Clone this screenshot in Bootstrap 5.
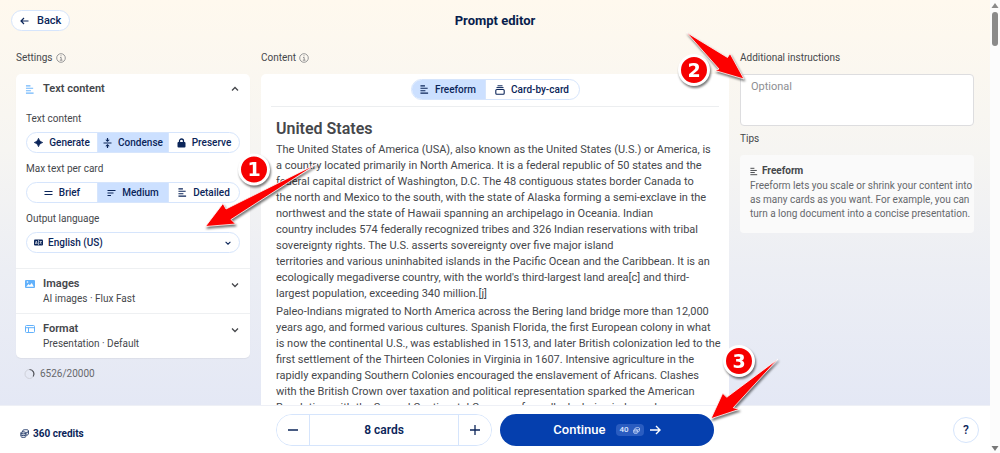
<!DOCTYPE html>
<html lang="en">
<head>
<meta charset="utf-8">
<meta name="viewport" content="width=device-width, initial-scale=1">
<title>Prompt editor</title>
<link href="https://cdn.jsdelivr.net/npm/bootstrap@5.3.0/dist/css/bootstrap.min.css" rel="stylesheet">
<style>
:root{--ink:#0b2559;--text:#45474b;--soft:#66686c;--line:#d6e5fc;--pick:#cce0ff}
body{font-family:Roboto,"Liberation Sans",sans-serif;font-size:10px;line-height:16px;color:var(--text)}
svg{flex:none}
.editor{background:linear-gradient(#fff9ee 0,#f6f5f2 150px,#eceef4 270px,#e4e8f5 405px)}
.cols{display:grid;grid-template-columns:minmax(0,1fr) minmax(0,2fr) minmax(0,1fr);column-gap:11px;padding:0 16px}
.topbar{height:41px}
.page-title{font-size:13px;font-weight:700;color:#071d4d;line-height:20px}
.pill{border:1px solid var(--line);background:#fff;color:var(--ink);font-weight:500;border-radius:16px}
.pill:hover{background:#f4f8ff;color:var(--ink);border-color:var(--line)}
.back-btn{font-size:11px;line-height:18px;padding:0 8px;height:21px;margin-left:-5px}
.col-label{height:16px;margin:9px 0 8px}
.info-icon{color:#7d7f83;margin-left:3px}
.panel{background:#fff;border-radius:5px}
.settings-panel{box-shadow:0 1px 1px #0000000d}
.sec-title{font-size:11px;font-weight:600;line-height:16px}
.sec-sub{line-height:14px}
.sec-btn{border:0;background:none;color:var(--text);padding:7px 10px 7px 9px;text-align:left;width:100%}
.sec-icon{width:10px;margin-right:8px}
.sec-fields{padding:7px 10px}
.rule{border-top:1px solid #eef0f2}
.field{margin-bottom:8px}
.field-label{height:16px;margin-bottom:5px}
.seg{border:1px solid var(--line);border-radius:11px;overflow:hidden;background:#fff;height:21px}
.seg .btn{flex:1 1 0;border:0;border-radius:0;padding:0;color:var(--ink);font-size:10px;font-weight:500;line-height:19px;display:flex;align-items:center;justify-content:center;gap:6px}
.seg .btn + .btn-check + .btn{border-left:1px solid var(--line)}
.seg .btn-check:checked + .btn{background:var(--pick);color:var(--ink)}
.mode-seg{width:169px}
.mode-seg .btn{flex:0 0 auto;width:73px}
.mode-seg .btn:last-child{width:94px}
.lang{appearance:none;width:100%;height:21px;padding:0 24px 0 21px;font-size:10px;line-height:18px;outline-offset:1px}
.lang-icon{position:absolute;left:8px;top:6px}
.lang-arrow{position:absolute;right:8px;top:7px}
.modebar{padding:5px 0 6px;margin:0 10px;border-bottom:1px solid #eceef0}
.doc{padding:11px 15px 0;font-size:11px;white-space:nowrap}
.doc h1{font-size:16px;line-height:22px;font-weight:600;margin:0 0 2px}
.doc p{margin:0 0 2px}
.extra{height:52px;border:1px solid #dddddf;border-radius:4px;padding:3px 10px;font-size:11px;line-height:17px;resize:none;width:100%;display:block;background:#fff}
.extra::placeholder{color:#8d8e92}
.tip{background:#fafafa;border-radius:4px;padding:8px 0 12px 10px}
.tip-body{line-height:14px;color:var(--soft);white-space:nowrap}
.foot{background:#fff;height:48px;box-shadow:0 -1px 0 #eef0f6;position:relative}
.actions{padding:8px 15px 7px;gap:8px}
.stepper{flex:1 1 0;height:32px;border:1px solid var(--line);border-radius:16px;overflow:hidden}
.stepper button{width:32px;border:0;background:#fff;color:var(--ink);padding:0}
.stepper output{border:solid var(--line);border-width:0 1px;font-size:12px;font-weight:600;color:var(--ink);line-height:30px}
.go{flex:1 1 0;height:32px;border:0;border-radius:16px;background:#053fae;color:#fff;font-size:13px;font-weight:500;padding:0}
.go:hover{background:#04358f;color:#fff}
.cost{background:#2a5cc0;border-radius:4px;font-size:8px;line-height:12px;padding:0 4px;margin:0 6px 0 10px;color:#dbe7ff}
.help{width:26px;height:26px;border-radius:50%;font-size:12px;line-height:24px;padding:0;margin-right:-5px}
.scroller{width:10px;flex:none;background:#fcfcfc;padding:3px 0 2px}
.thumb{width:6px;height:34px;border-radius:3px;background:#8b8b8b;margin-top:4px}
.note{position:absolute;pointer-events:none;z-index:5;overflow:visible;filter:drop-shadow(1px 2px 1px #0008)}
.note text{font:700 19px "DejaVu Sans",sans-serif;fill:#fff;text-anchor:middle}
.note-1{left:205px;top:153px}.note-2{left:678px;top:32px}.note-3{left:711px;top:345px}
</style>
</head>
<body class="vh-100 overflow-hidden d-flex position-relative">

<svg class="d-none" aria-hidden="true">
  <symbol id="lines" viewBox="0 0 10 10"><path d="M.5 1h5M.5 3.700h8M.5 6.300h5.500M.5 9h8.500" stroke="currentColor" fill="none" stroke-width="1.200"/></symbol>
  <symbol id="down" viewBox="0 0 10 10"><path d="M2 3.500l3 3 3-3" stroke="currentColor" fill="none" stroke-width="1.300"/></symbol>
  <symbol id="info" viewBox="0 0 10 10"><g stroke="currentColor" fill="none" stroke-width=".8"><circle cx="5" cy="5" r="4.300"/><path d="M4 4.500h1.200v2.700M3.800 7.200h2.700M5 2.300v1"/></g></symbol>
  <symbol id="coins" viewBox="0 0 10 10"><g stroke="currentColor" fill="none" stroke-width="1"><path d="M3 3.200V1.900C3 .5 9.300.3 9.300 1.700v3.800c0 .8-1 1.200-2 1.300"/><path d="M1 4.300v3.900c0 1.600 5.700 1.400 5.700 0V4.300"/><ellipse cx="3.850" cy="4.300" rx="2.850" ry="1.100"/><path d="M1 6.200c0 1.500 5.700 1.400 5.700 0M7 3.800c1.200 0 2.300-.4 2.300-1.200"/></g></symbol>
</svg>

<div class="flex-grow-1 d-flex flex-column overflow-hidden">
  <main class="editor flex-grow-1 overflow-hidden">
    <header class="cols topbar align-items-center">
      <div class="d-flex"><button class="btn pill back-btn d-flex align-items-center"><svg class="me-2" width="9" height="10" viewBox="0 0 9 10"><path d="M8.500 5H1M4 2L1 5l3 3" stroke="currentColor" fill="none" stroke-width="1.200"/></svg>Back</button></div>
      <div class="page-title text-center">Prompt editor</div>
    </header>

    <div class="cols">
      <section>
        <div class="col-label d-flex align-items-center">Settings<svg class="info-icon" width="10" height="10"><use href="#info"/></svg></div>
        <div class="panel settings-panel">
          <button class="sec-btn d-flex align-items-center" aria-expanded="true">
            <svg class="sec-icon" style="color:#70b7fc" width="10" height="9"><use href="#lines"/></svg>
            <span class="sec-title flex-grow-1">Text content</span>
            <svg width="10" height="10" viewBox="0 0 10 10"><path d="M2 6.500l3-3 3 3" stroke="currentColor" fill="none" stroke-width="1.300"/></svg>
          </button>
          <div class="sec-fields">
            <div class="field">
              <div class="field-label">Text content</div>
              <div class="seg d-flex" role="group" aria-label="Text content">
                <input class="btn-check" type="radio" name="mode" id="gen"><label class="btn" for="gen"><svg width="9" height="9" viewBox="0 0 9 9"><path d="M4.500.3Q5.200 3.800 8.700 4.500 5.200 5.200 4.500 8.700 3.800 5.200.3 4.500 3.800 3.800 4.500.3z" fill="currentColor" stroke="currentColor" stroke-width=".8"/></svg>Generate</label>
                <input class="btn-check" type="radio" name="mode" id="con" checked><label class="btn" for="con"><svg width="9" height="10" viewBox="0 0 9 10"><path d="M.5 5h8M4.500 0v2.500M4.500 10V7.500" stroke="currentColor" stroke-width="1.200"/><path d="M2.300 1.700h4.400L4.500 3.900zM2.300 8.300h4.400L4.500 6.100z" fill="currentColor"/></svg>Condense</label>
                <input class="btn-check" type="radio" name="mode" id="pre"><label class="btn" for="pre"><svg width="9" height="10" viewBox="0 0 9 10"><rect x=".5" y="4" width="8" height="5.500" rx="1" fill="currentColor"/><path d="M2.500 4.500V3a2 2 0 014 0v1.500" stroke="currentColor" fill="none" stroke-width="1.300"/></svg>Preserve</label>
              </div>
            </div>
            <div class="field">
              <div class="field-label">Max text per card</div>
              <div class="seg d-flex" role="group" aria-label="Max text per card">
                <input class="btn-check" type="radio" name="amount" id="brief"><label class="btn" for="brief"><svg width="9" height="9" viewBox="0 0 9 9"><path d="M.5 3.500h8M.5 6.500h8" stroke="currentColor"/></svg>Brief</label>
                <input class="btn-check" type="radio" name="amount" id="med" checked><label class="btn" for="med"><svg width="9" height="9" viewBox="0 0 9 9"><path d="M.5 2.500h8M.5 5h6M.5 7.500h3.500" stroke="currentColor"/></svg>Medium</label>
                <input class="btn-check" type="radio" name="amount" id="det"><label class="btn" for="det"><svg width="9" height="9"><use href="#lines"/></svg>Detailed</label>
              </div>
            </div>
            <div class="field">
              <label class="field-label d-block" for="lang">Output language</label>
              <div class="position-relative d-flex">
                <select class="pill lang" id="lang"><option>English (US)</option></select>
                <svg class="lang-icon" width="9" height="9" viewBox="0 0 9 9"><rect y="1.500" width="9" height="6" rx="1" fill="#0b2559"/><path d="M1.300 6l1-3 1 3M1.600 5.200h1.400M5.500 3.500h2.300M6.600 3v.5M5.700 6l1.700-2.500M6 4.500L7.700 6M4.500 2v5" stroke="#fff" stroke-width=".6" fill="none"/></svg>
                <svg class="lang-arrow" width="8" height="8" style="color:#0b2559"><use href="#down"/></svg>
              </div>
            </div>
          </div>
          <button class="sec-btn rule d-flex align-items-start" aria-expanded="false">
            <svg class="sec-icon mt-1" width="10" height="8" viewBox="0 0 10 8"><rect width="10" height="8" rx="1" fill="#62b1fb"/><path d="M1.200 6.800L3.500 4l1.300 1.200L6.800 3l2 3.800z" fill="#fff"/><circle cx="2.500" cy="2" r=".8" fill="#fff"/></svg>
            <span class="flex-grow-1"><span class="sec-title d-block">Images</span><span class="sec-sub d-block">AI images · Flux Fast</span></span>
            <svg class="mt-1" width="10" height="10"><use href="#down"/></svg>
          </button>
          <button class="sec-btn rule d-flex align-items-start" aria-expanded="false">
            <svg class="sec-icon mt-1" width="10" height="8" viewBox="0 0 10 8"><g fill="none" stroke="#62b1fb"><rect x=".5" y=".5" width="9" height="7" rx="1"/><path d="M.5 2.700h9M3.500 2.700v5"/></g></svg>
            <span class="flex-grow-1"><span class="sec-title d-block">Format</span><span class="sec-sub d-block">Presentation · Default</span></span>
            <svg class="mt-1" width="10" height="10"><use href="#down"/></svg>
          </button>
        </div>
        <div class="d-flex align-items-center mt-2 ps-1" style="color:#66686c"><svg class="ms-1 me-1" width="12" height="12" viewBox="0 0 12 12"><circle cx="5.500" cy="6" r="4.500" fill="none" stroke="#cfd1da"/><path d="M5.500 1.500a4.500 4.500 0 013.700 7" fill="none" stroke="#55575e" stroke-width="1.200"/></svg>6526/20000</div>
      </section>

      <section>
        <div class="col-label d-flex align-items-center">Content<svg class="info-icon" width="10" height="10"><use href="#info"/></svg></div>
        <div class="panel">
          <div class="modebar d-flex justify-content-center">
            <div class="seg mode-seg d-flex" role="group" aria-label="Content mode">
              <input class="btn-check" type="radio" name="layout" id="free" checked><label class="btn" for="free"><svg width="9" height="9"><use href="#lines"/></svg>Freeform</label>
              <input class="btn-check" type="radio" name="layout" id="cards"><label class="btn" for="cards"><svg width="10" height="10" viewBox="0 0 10 10"><path d="M2.500.8h5M1.500 2.600h7" stroke="currentColor"/><rect x=".8" y="4.500" width="8.400" height="4.700" rx="1" fill="none" stroke="currentColor" stroke-width="1.100"/></svg>Card-by-card</label>
            </div>
          </div>
          <article class="doc">
            <h1>United States</h1>
            <p>The United States of America (USA), also known as the United States (U.S.) or America, is<br>a country located primarily in North America. It is a federal republic of 50 states and the<br>federal capital district of Washington, D.C. The 48 contiguous states border Canada to<br>the north and Mexico to the south, with the state of Alaska forming a semi-exclave in the<br>northwest and the state of Hawaii spanning an archipelago in Oceania. Indian<br>country includes 574 federally recognized tribes and 326 Indian reservations with tribal<br>sovereignty rights. The U.S. asserts sovereignty over five major island<br>territories and various uninhabited islands in the Pacific Ocean and the Caribbean. It is an<br>ecologically megadiverse country, with the world's third-largest land area[c] and third-<br>largest population, exceeding 340 million.[j]</p>
            <p>Paleo-Indians migrated to North America across the Bering land bridge more than 12,000<br>years ago, and formed various cultures. Spanish Florida, the first European colony in what<br>is now the continental U.S., was established in 1513, and later British colonization led to the<br>first settlement of the Thirteen Colonies in Virginia in 1607. Intensive agriculture in the<br>rapidly expanding Southern Colonies encouraged the enslavement of Africans. Clashes<br>with the British Crown over taxation and political representation sparked the American<br>Revolution, with the Second Continental Congress formally declaring independence on</p>
          </article>
        </div>
      </section>

      <section>
        <label class="col-label d-block" for="extra">Additional instructions</label>
        <textarea class="extra" id="extra" placeholder="Optional"></textarea>
        <div style="margin:5px 0 8px">Tips</div>
        <div class="tip">
          <div class="d-flex align-items-center fw-bold"><svg class="me-1" width="8" height="9"><use href="#lines"/></svg>Freeform</div>
          <div class="tip-body">Freeform lets you scale or shrink your content into<br>as many cards as you want. For example, you can<br>turn a long document into a concise presentation.</div>
        </div>
      </section>
    </div>
  </main>

  <footer class="foot cols align-items-center">
    <div class="d-flex align-items-center fw-bold ps-1 pt-2" style="color:#0b2559"><svg class="me-1" width="9" height="9"><use href="#coins"/></svg>360 credits</div>
    <div class="actions d-flex">
      <div class="stepper d-flex">
        <button aria-label="Fewer cards"><svg width="10" height="10" viewBox="0 0 10 10"><path d="M0 5h10" stroke="currentColor" stroke-width="1.300"/></svg></button>
        <output class="flex-grow-1 text-center">8 cards</output>
        <button aria-label="More cards"><svg width="10" height="10" viewBox="0 0 10 10"><path d="M0 5h10M5 0v10" stroke="currentColor" stroke-width="1.300"/></svg></button>
      </div>
      <button class="btn go d-flex align-items-center justify-content-center">Continue<span class="cost d-flex align-items-center">40<svg class="ms-1" width="7" height="7"><use href="#coins"/></svg></span><svg width="11" height="10" viewBox="0 0 11 10"><path d="M0 5h10M6 1l4 4-4 4" stroke="currentColor" fill="none" stroke-width="1.400"/></svg></button>
    </div>
    <div class="d-flex justify-content-end"><button class="btn pill help" aria-label="Help">?</button></div>
  </footer>
</div>

<div class="scroller d-flex flex-column align-items-center" aria-hidden="true">
  <svg width="8" height="5" viewBox="0 0 8 5"><path d="M4 0l3.500 5h-7z" fill="#8b8b8b"/></svg>
  <div class="thumb"></div>
  <svg class="mt-auto" width="8" height="5" viewBox="0 0 8 5"><path d="M.5 0h7L4 5z" fill="#777"/></svg>
</div>

<svg class="note note-1" width="114" height="76" viewBox="205 153 114 76"><path d="M205.500 226.500L223 203.500l3 5.500 91.500-45.500-86.500 56 4.500 4.500z" fill="#fd0000" stroke="#fff" stroke-width=".8"/><circle cx="254" cy="169.500" r="14.500" fill="#f60000" stroke="#fff" stroke-width="3"/><text x="254" y="176">1</text></svg>
<svg class="note note-2" width="68" height="56" viewBox="678 32 68 56"><path d="M686.500 32.500l41 25 2.500-4 14 25.500-29-8.500 4-1.500z" fill="#fd0000" stroke="#fff" stroke-width=".8"/><circle cx="694" cy="70" r="14.500" fill="#f60000" stroke="#fff" stroke-width="3"/><text x="694" y="77">2</text></svg>
<svg class="note note-3" width="68" height="76" viewBox="711 345 68 76"><path d="M778 359l-51.300 38.300-4-4L711 418.700l28.300-9.400-6-1.600z" fill="#fd0000" stroke="#fff" stroke-width=".8"/><circle cx="739" cy="361" r="14.500" fill="#f60000" stroke="#fff" stroke-width="3"/><text x="739" y="368">3</text></svg>

<script src="https://cdn.jsdelivr.net/npm/bootstrap@5.3.0/dist/js/bootstrap.bundle.min.js"></script>
</body>
</html>
